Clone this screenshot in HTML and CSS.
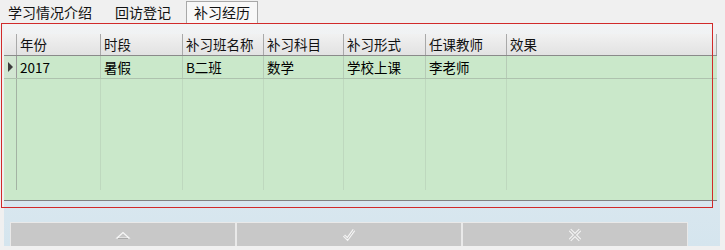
FILE: index.html
```html
<!DOCTYPE html>
<html lang="zh">
<head>
<meta charset="utf-8">
<title>补习经历</title>
<link rel="stylesheet" href="styles.css">
</head>
<body>
<div class="tabs">
  <span class="tab">学习情况介绍</span>
  <span class="tab">回访登记</span>
  <span class="tab active">补习经历</span>
</div>
<div class="panel">
  <div class="grid">
    <div class="row head">
      <div class="cell sel"></div>
      <div class="cell">年份</div>
      <div class="cell">时段</div>
      <div class="cell">补习班名称</div>
      <div class="cell">补习科目</div>
      <div class="cell">补习形式</div>
      <div class="cell">任课教师</div>
      <div class="cell">效果</div>
    </div>
    <div class="row data">
      <div class="cell sel"><span class="arrow"></span></div>
      <div class="cell">2017</div>
      <div class="cell">暑假</div>
      <div class="cell">B二班</div>
      <div class="cell">数学</div>
      <div class="cell">学校上课</div>
      <div class="cell">李老师</div>
      <div class="cell"></div>
    </div>
    <div class="row filler">
      <div class="cell sel"></div>
      <div class="cell"></div>
      <div class="cell"></div>
      <div class="cell"></div>
      <div class="cell"></div>
      <div class="cell"></div>
      <div class="cell"></div>
      <div class="cell last"></div>
    </div>
  </div>
  <div class="footer">
    <div class="btn">
      <svg width="16" height="10" viewBox="0 0 16 10"><polygon points="2,8 8,2.5 14,8" fill="none" stroke="#f7f7f7" stroke-width="1.2"/><line x1="3" y1="8.5" x2="13" y2="8.5" stroke="#9a9a9a" stroke-width="0.8"/></svg>
    </div>
    <div class="btn">
      <svg width="14" height="14" viewBox="0 0 14 14"><path d="M2 7.5 L5.5 11 L12 2" fill="none" stroke="#f5f5f5" stroke-width="3" stroke-linejoin="miter"/><path d="M2 7.5 L5.5 11 L12 2" fill="none" stroke="#c4c4c4" stroke-width="1"/></svg>
    </div>
    <div class="btn">
      <svg width="14" height="14" viewBox="0 0 14 14"><path d="M2 2 L12 12 M12 2 L2 12" fill="none" stroke="#f5f5f5" stroke-width="3.2"/><path d="M2 2 L12 12 M12 2 L2 12" fill="none" stroke="#c4c4c4" stroke-width="1.1"/></svg>
    </div>
  </div>
</div>
<div class="highlight"></div>
</body>
</html>
```
FILE: styles.css
```css
html, body {
  margin: 0;
  padding: 0;
}
body {
  width: 725px;
  height: 250px;
  overflow: hidden;
  background: #f0f0f0;
  font-family: "Noto Sans CJK SC", "Noto Sans", sans-serif;
  color: #111;
  position: relative;
}
.tabs {
  display: flex;
  height: 23px;
  padding-top: 1px;
  box-sizing: border-box;
  gap: 7px;
}
.tab {
  display: block;
  height: 22px;
  line-height: 21px;
  padding: 0 7px;
  border: 1px solid transparent;
  border-bottom: none;
  font-size: 14px;
  color: #111;
  white-space: nowrap;
}
.tab.active {
  border-color: #a8a8a8;
  background: #f8f8f8;
}
.panel {
  margin-left: 4px;
  width: 716px;
  padding-top: 11px;
  background: linear-gradient(to bottom, #f2f3f4 0px, #e8eef2 60px, #d9e7ef 170px, #d5e5ee 100%);
}
.grid {
  width: 713px;
  height: 167px;
  background: #cae8ca;
  border-bottom: 1px solid #808080;
  box-sizing: border-box;
  display: flex;
  flex-direction: column;
}
.row {
  display: grid;
  grid-template-columns: 13px 84px 82px 81px 80px 82px 81px 210px;
}
.cell {
  box-sizing: border-box;
  padding-left: 3px;
  font-size: 13.5px;
  white-space: nowrap;
  overflow: hidden;
}
.head {
  height: 22px;
  background: linear-gradient(to bottom, #f1f1f1, #e2e2e2);
  border-bottom: 1px solid #8a8a8a;
  box-sizing: border-box;
}
.head .cell {
  line-height: 20px;
  border-right: 1px solid #a9a9a9;
  color: #111;
}
.data {
  height: 23px;
  border-bottom: 1px solid #aec2ae;
  box-sizing: border-box;
}
.data .cell {
  line-height: 22px;
  border-right: 1px solid #b6cbb6;
  color: #000;
}
.data .cell:last-child {
  border-right: none;
}
.cell.sel {
  padding: 0;
  position: relative;
}
.data .cell.sel {
  background: #d2e6d2;
  border-right-color: #9a9a9a;
}
.arrow {
  display: block;
  width: 0;
  height: 0;
  margin: 6px 0 0 4px;
  border-top: 5px solid transparent;
  border-bottom: 5px solid transparent;
  border-left: 5px solid #3c3c3c;
}
.filler {
  height: 111px;
}
.filler .cell {
  border-right: 1px solid #bed8be;
}
.filler .cell.sel {
  border-right-color: #a3b3a3;
}
.filler .cell.last {
  border-right: none;
}
.footer {
  height: 45px;
  padding: 21px 0 0 6px;
  box-sizing: border-box;
  display: flex;
}
.btn {
  width: 226px;
  height: 24px;
  box-sizing: border-box;
  background: #c8c8c8;
  border: 1px solid #e9e9e9;
  border-bottom: none;
  display: flex;
  align-items: center;
  justify-content: center;
}
.highlight {
  position: absolute;
  left: 1px;
  top: 23px;
  width: 712px;
  height: 185px;
  box-sizing: border-box;
  border: 1px solid #d12a2a;
  pointer-events: none;
}
```
